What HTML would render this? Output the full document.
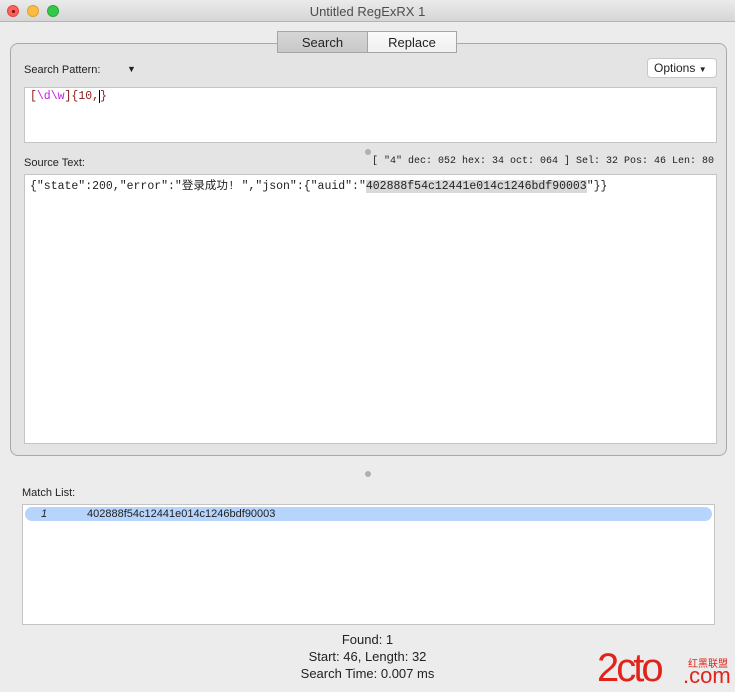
<!DOCTYPE html>
<html><head><meta charset="utf-8"><style>
*{margin:0;padding:0;box-sizing:border-box}
body{width:735px;height:692px;background:#ececec;font-family:"Liberation Sans","Noto Sans CJK SC",sans-serif;font-size:11px;color:#222;position:relative;overflow:hidden}
.a{position:absolute}
.mono{font-family:"Liberation Mono","Noto Sans CJK SC",monospace;font-size:11.5px}
</style></head><body>
<div class="a" style="left:0;top:0;width:735px;height:22px;background:linear-gradient(#ebebeb,#d6d6d6);border-bottom:1px solid #b5b5b5"></div>
<div class="a" style="left:7px;top:5px;width:12px;height:12px;border-radius:50%;background:#fc605b;border:1px solid #de4842"></div>
<div class="a" style="left:12px;top:10px;width:3px;height:3px;border-radius:50%;background:#7a1010"></div>
<div class="a" style="left:27px;top:5px;width:12px;height:12px;border-radius:50%;background:#fdbc40;border:1px solid #de9f34"></div>
<div class="a" style="left:47px;top:5px;width:12px;height:12px;border-radius:50%;background:#34c84a;border:1px solid #27aa35"></div>
<div class="a" style="left:0;top:4px;width:735px;text-align:center;font-size:13px;color:#4d4d4d">Untitled RegExRX 1</div>

<div class="a" style="left:10px;top:43px;width:717px;height:413px;border:1px solid #a9a9a9;border-radius:8px;background:#e4e4e4"></div>
<div class="a" style="left:277px;top:31px;width:91px;height:22px;border:1px solid #a5a5a5;background:linear-gradient(#d6d6d6,#c9c9c9);text-align:center;font-size:13px;line-height:21px">Search</div>
<div class="a" style="left:367px;top:31px;width:90px;height:22px;border:1px solid #a5a5a5;background:linear-gradient(#fafafa,#f0f0f0);text-align:center;font-size:13px;line-height:21px">Replace</div>

<div class="a" style="left:24px;top:64px">Search Pattern:</div>
<div class="a" style="left:127px;top:64px;font-size:9px">▼</div>
<div class="a" style="left:647px;top:58px;width:70px;height:20px;background:#fff;border:1px solid #c8c8c8;border-radius:4px;font-size:12px;padding:2px 0 0 6px">Options <span style="font-size:8px">▼</span></div>

<div class="a mono" style="left:24px;top:87px;width:693px;height:56px;background:#fff;border:1px solid #c4c4c4;padding:2px 0 0 5px;color:#8b1a1a">[<span style="color:#c020e0">\d\w</span>]{10,<span style="border-left:1px solid #000"></span>}</div>

<div class="a" style="left:365px;top:149px;width:6px;height:6px;border-radius:50%;background:#b0b0b0"></div>
<div class="a" style="left:24px;top:157px">Source Text:</div>
<div class="a mono" style="left:372px;top:156px;font-size:10px;white-space:nowrap">[ "4" dec: 052 hex: 34 oct: 064 ] Sel: 32 Pos: 46 Len: 80</div>

<div class="a mono" style="left:24px;top:174px;width:693px;height:270px;background:#fff;border:1px solid #c4c4c4;padding:2px 0 0 5px;white-space:pre">{"state":200,"error":"登录成功! ","json":{"auid":"<span style="background:#d9d9d9">402888f54c12441e014c1246bdf90003</span>"}}</div>

<div class="a" style="left:365px;top:471px;width:6px;height:6px;border-radius:50%;background:#b0b0b0"></div>
<div class="a" style="left:22px;top:487px">Match List:</div>
<div class="a" style="left:22px;top:504px;width:693px;height:121px;background:#fff;border:1px solid #c4c4c4"></div>
<div class="a" style="left:25px;top:507px;width:687px;height:14px;background:#b6d4fc;border-radius:7px"></div>
<div class="a" style="left:41px;top:508px;font-style:italic">1</div>
<div class="a" style="left:87px;top:508px">402888f54c12441e014c1246bdf90003</div>

<div class="a" style="left:0;top:631px;width:735px;text-align:center;font-size:13px;line-height:17px">Found: 1<br>Start: 46, Length: 32<br>Search Time: 0.007 ms</div>
<div class="a" style="left:597px;top:646px;font-size:40px;color:#e0241c;letter-spacing:-3px;line-height:44px">2cto</div>
<div class="a" style="left:688px;top:655px;font-size:10px;color:#e0241c">红黑联盟</div>
<div class="a" style="left:683px;top:663px;font-size:22px;color:#e0241c">.com</div>
</body></html>
